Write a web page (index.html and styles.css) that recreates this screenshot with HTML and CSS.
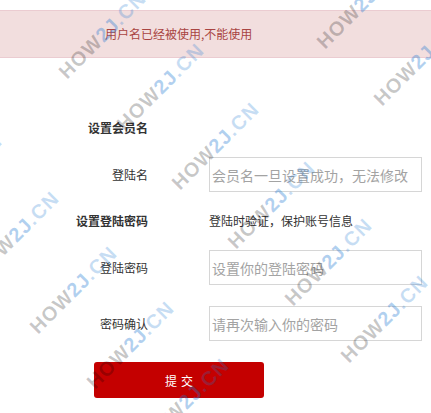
FILE: index.html
```html
<!DOCTYPE html>
<html>
<head>
  <title>注册</title>
  <meta charset="utf-8">
  <link rel="stylesheet" href="styles.css">
</head>
<body>
  <!-- Error message -->
  <div class="alert">用户名已经被使用,不能使用</div>

  <!-- Register form -->
  <form class="reg-form" action="#" method="post">
    <div class="row row-title">
      <label class="label strong">设置会员名</label>
    </div>
    <div class="row">
      <label class="label">登陆名</label>
      <input class="field" type="text" name="name" placeholder="会员名一旦设置成功，无法修改">
    </div>
    <div class="row row-title">
      <label class="label strong">设置登陆密码</label>
      <span class="hint">登陆时验证，保护账号信息</span>
    </div>
    <div class="row row-wide">
      <label class="label">登陆密码</label>
      <input class="field" type="password" name="password" placeholder="设置你的登陆密码">
    </div>
    <div class="row row-wide">
      <label class="label">密码确认</label>
      <input class="field" type="password" name="repeatpassword" placeholder="请再次输入你的密码">
    </div>
    <button type="submit" class="submit-btn">提交</button>
  </form>

  <!-- Watermark layer -->
  <div class="watermark">
    <span class="wm" style="left:67px;top:63px"><b>HOW</b><i>2J</i><em>.CN</em></span>
    <span class="wm" style="left:125px;top:115px"><b>HOW</b><i>2J</i><em>.CN</em></span>
    <span class="wm" style="left:180px;top:174px"><b>HOW</b><i>2J</i><em>.CN</em></span>
    <span class="wm" style="left:236px;top:233px"><b>HOW</b><i>2J</i><em>.CN</em></span>
    <span class="wm" style="left:293px;top:290px"><b>HOW</b><i>2J</i><em>.CN</em></span>
    <span class="wm" style="left:349px;top:347px"><b>HOW</b><i>2J</i><em>.CN</em></span>
    <span class="wm" style="left:325px;top:33px"><b>HOW</b><i>2J</i><em>.CN</em></span>
    <span class="wm" style="left:382px;top:90px"><b>HOW</b><i>2J</i><em>.CN</em></span>
    <span class="wm" style="left:-77px;top:206px"><b>HOW</b><i>2J</i><em>.CN</em></span>
    <span class="wm" style="left:-20px;top:263px"><b>HOW</b><i>2J</i><em>.CN</em></span>
    <span class="wm" style="left:38px;top:318px"><b>HOW</b><i>2J</i><em>.CN</em></span>
    <span class="wm" style="left:95px;top:373px"><b>HOW</b><i>2J</i><em>.CN</em></span>
    <span class="wm" style="left:150px;top:430px"><b>HOW</b><i>2J</i><em>.CN</em></span>
  </div>
</body>
</html>
```

FILE: styles.css
```css
/* Base */
html, body {
  margin: 0;
  padding: 0;
  background: #fff;
  overflow: hidden;
  font-family: "Noto Sans CJK SC", "Noto Sans", sans-serif;
  color: #333;
}

/* Alert */
.alert {
  margin-top: 10px;
  height: 48px;
  box-sizing: border-box;
  border-top: 1px solid #ebccd1;
  border-bottom: 1px solid #ebccd1;
  background: #f2dede;
  color: #a94442;
  font-size: 12px;
  line-height: 46px;
  padding-left: 105px;
}

/* Form */
.reg-form {
  margin: 0;
  padding-top: 60px;
}

.row {
  display: flex;
  align-items: center;
  height: 35px;
  margin-bottom: 19px;
}

.row-title {
  height: 20px;
}

.row-wide {
  margin-bottom: 21px;
}

.label {
  width: 148px;
  margin-right: 61px;
  text-align: right;
  font-size: 12px;
  line-height: 20px;
  color: #333;
}

.label.strong {
  font-weight: bold;
}

.hint {
  font-size: 12px;
  line-height: 20px;
  color: #333;
}

.field {
  width: 213px;
  height: 35px;
  box-sizing: border-box;
  border: 1px solid #d6d6d6;
  border-radius: 0;
  padding: 0 2px;
  margin: 0;
  font-family: "Noto Sans CJK SC", sans-serif;
  font-size: 14px;
  color: #333;
  outline: none;
}

.field::placeholder {
  color: #a3a3a3;
}

/* Submit */
.submit-btn {
  display: block;
  margin-left: 94px;
  width: 170px;
  height: 36px;
  border: none;
  border-radius: 3px;
  background: #c40000;
  color: #fff;
  font-family: "Noto Sans CJK SC", sans-serif;
  font-size: 12px;
  letter-spacing: 4px;
  padding: 0 0 0 4px;
  cursor: pointer;
}

/* Watermark */
.watermark {
  position: absolute;
  left: 0;
  top: 0;
  width: 100%;
  height: 100%;
  overflow: hidden;
  pointer-events: none;
  z-index: 10;
}

.wm {
  position: absolute;
  white-space: nowrap;
  font-family: "Liberation Sans", Arial, sans-serif;
  font-size: 20px;
  font-weight: bold;
  letter-spacing: 1px;
  line-height: 20px;
  height: 20px;
  transform-origin: 0 17px;
  transform: rotate(-45deg);
}

.wm b {
  color: rgba(0, 0, 0, 0.22);
}

.wm i {
  font-style: normal;
  color: rgba(30, 120, 210, 0.35);
}

.wm em {
  font-style: normal;
  color: rgba(30, 120, 210, 0.25);
}
```
